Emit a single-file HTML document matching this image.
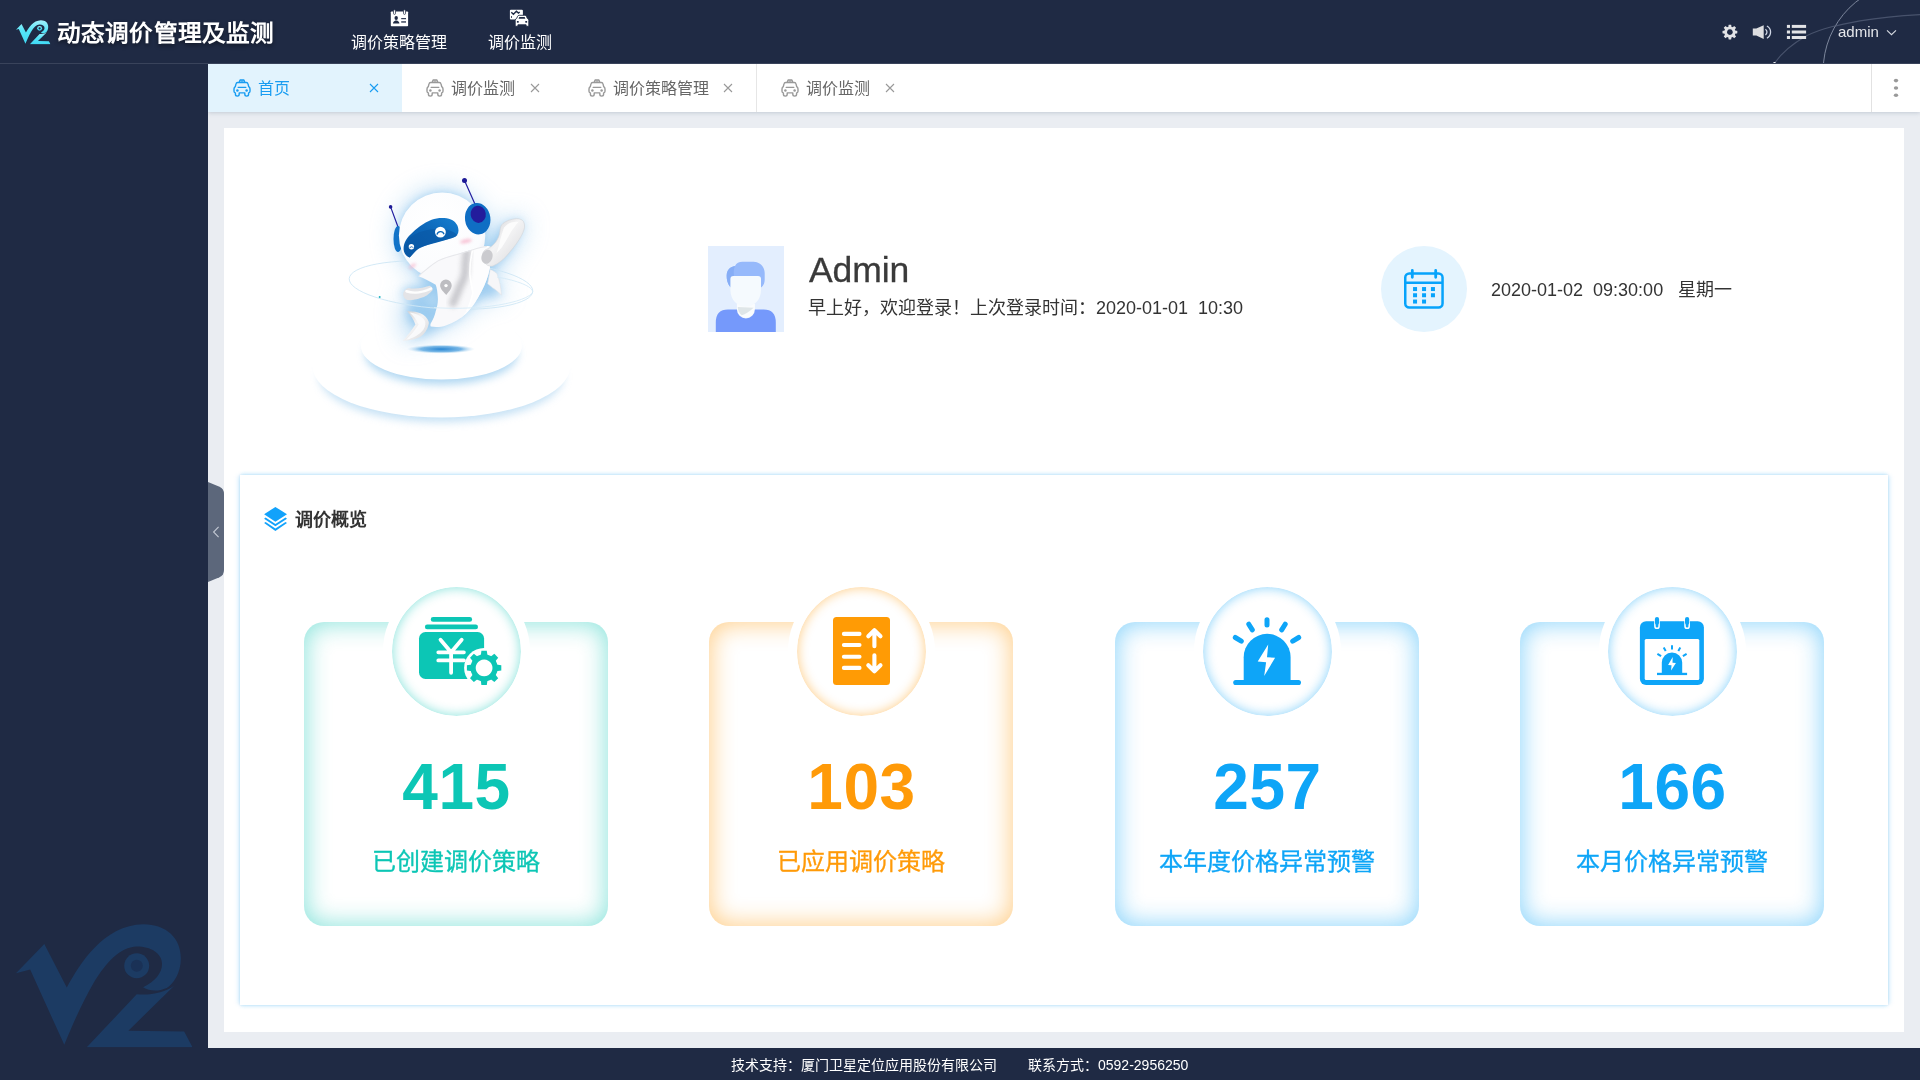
<!DOCTYPE html>
<html lang="zh-CN">
<head>
<meta charset="utf-8">
<title>动态调价管理及监测</title>
<style>
*{box-sizing:border-box;margin:0;padding:0}
html,body{width:1920px;height:1080px;overflow:hidden}
body{position:relative;background:#1f2a44;font-family:"Liberation Sans",sans-serif;color:#333}
.abs{position:absolute}
svg{display:block;overflow:visible}
/* header */
#header{position:absolute;left:0;top:0;width:1920px;height:64px;background:#1f2a44;border-bottom:1px solid #39435b;overflow:hidden}
#title{position:absolute;left:57px;top:16px;height:36px;line-height:36px;font-size:22.5px;transform:scaleX(1.0495);transform-origin:0 50%;font-weight:700;color:#fff;white-space:nowrap;text-shadow:0 2px 4px rgba(0,0,0,.45)}
.nav{position:absolute;top:0;height:64px;color:#fff;font-size:16px;text-align:center;white-space:nowrap}
.nav .t{position:absolute;left:0;right:0;top:31px;line-height:24px}
.nav svg{position:absolute;top:9px}
#user{position:absolute;left:1838px;top:20px;line-height:24px;font-size:15px;color:#e4e6ea}
/* sidebar */
#side{position:absolute;left:0;top:64px;width:208px;height:984px;background:#1f2a44;overflow:hidden}
/* tabs */
#tabs{position:absolute;left:208px;top:64px;width:1712px;height:48px;background:#fff;box-shadow:0 1px 4px rgba(110,125,150,.3);clip-path:inset(0 0 -12px 0);z-index:3}
.tab{position:absolute;top:0;height:48px;font-size:16px;line-height:48px;color:#666;white-space:nowrap}
.tab svg{position:absolute;top:14px}
.tab .tx{position:absolute;top:1px}
.tab.on{background:#e2f3fd;color:#189cf1}
/* main */
#main{position:absolute;left:208px;top:112px;width:1712px;height:936px;background:#eaedf2}
#box{position:absolute;left:224px;top:128px;width:1680px;height:904px;background:#fff}
#panel{position:absolute;left:240px;top:475px;width:1648px;height:530px;background:#fff;box-shadow:0 0 2px 0 rgba(150,185,225,.3),-3px 0 4px -1px rgba(150,212,250,.4),3px 0 4px -1px rgba(150,212,250,.4),0 -3px 3px -1px rgba(170,228,250,.32),0 3px 3px -1px rgba(170,228,250,.32)}
#ptitle{position:absolute;left:295px;top:506px;line-height:28px;font-size:18px;font-weight:700;color:#333}
.card{position:absolute;top:622px;width:304px;height:304px;border-radius:20px;background:#fff}
.circ{position:absolute;top:577.5px;width:147px;height:147px;border-radius:50%;border:9.5px solid #fff;background:#fff;margin-left:-1.5px}
.num{position:absolute;top:751px;width:304px;text-align:center;font-size:64px;line-height:72px;font-weight:700;letter-spacing:.5px;text-indent:1px}
.lab{position:absolute;top:843.5px;-webkit-text-stroke:.3px currentColor;width:304px;text-align:center;font-size:24px;line-height:36px;font-weight:500;white-space:nowrap}
.c1{color:#0cc6b5}.c2{color:#ff9a08}.c3{color:#0ea5f7}
.card.k1{box-shadow:inset 0 0 24px 2px rgba(12,198,181,.47)}
.card.k2{box-shadow:inset 0 0 24px 2px rgba(255,154,8,.47)}
.card.k3{box-shadow:inset 0 0 24px 2px rgba(14,165,247,.47)}
.circ.k1{box-shadow:inset 0 0 11px 1px rgba(12,198,181,.45)}
.circ.k2{box-shadow:inset 0 0 11px 1px rgba(255,154,8,.45)}
.circ.k3{box-shadow:inset 0 0 11px 1px rgba(14,165,247,.45)}
/* hero */
#uname{position:absolute;left:808.6px;top:245.5px;font-size:35.5px;line-height:48px;color:#3a3a3a;letter-spacing:-.1px;-webkit-text-stroke:.3px #3a3a3a}
#usub{position:absolute;left:808px;top:294px;font-size:18px;line-height:28px;color:#333;white-space:pre}
#calc{position:absolute;left:1381px;top:246px;width:86px;height:86px;border-radius:50%;background:#e4f4fe}
#date{position:absolute;left:1491px;top:276px;font-size:18px;line-height:28px;color:#333;white-space:pre}
#title,.nav .t,#user,.tab .tx,#uname,#usub,#date,#ptitle,.num,.lab,#foot span{will-change:transform}
/* footer */
#foot{position:absolute;left:0;top:1048px;width:1920px;height:32px;background:#1f2a44;color:#fff;font-size:14px;line-height:34px;white-space:pre}
</style>
</head>
<body>
<!-- SYMBOLS -->
<svg width="0" height="0" style="position:absolute">
<defs>
<symbol id="v2" viewBox="95 145 1060 740">
<path d="M95,440 L265,265 L400,525 C480,380 620,150 860,145 C1000,145 1085,230 1085,350 C1085,440 1040,505 1000,528 C950,550 900,548 858,524 C930,490 972,440 972,385 C972,320 905,280 820,280 C720,285 640,370 560,500 C490,620 430,760 385,870 L180,418 Z"/>
<path d="M820,566 C900,575 990,555 1045,515 L770,785 L1105,790 L1155,885 L520,885 Z"/>
<circle cx="820" cy="395" r="75"/>
</symbol>
<symbol id="taxi" viewBox="0 0 18 18">
<path d="M6.300,3.300 L7.100,1 H10.900 L11.700,3.300" fill="none" stroke="currentColor" stroke-width="1.400" stroke-linejoin="round"/>
<path d="M7.700,2.100 H10.300" stroke="currentColor" stroke-width="1.100" fill="none"/>
<path d="M4.700,3.500 H13.300 C14.300,3.500 14.800,4 15,4.900 L15.700,7.700 C16.600,8.300 17,9 17,10 V12.300 C17,13.300 16.500,13.800 15.600,13.900 V15.300 C15.600,16.500 14.900,17.100 13.700,17.100 C12.500,17.100 11.800,16.500 11.800,15.300 V13.900 H6.200 V15.300 C6.200,16.500 5.500,17.100 4.300,17.100 C3.100,17.100 2.400,16.500 2.400,15.300 V13.900 C1.500,13.800 1,13.300 1,12.300 V10 C1,9 1.400,8.300 2.300,7.700 L3,4.900 C3.200,4 3.700,3.500 4.700,3.500 Z" fill="none" stroke="currentColor" stroke-width="1.400" stroke-linejoin="round"/>
<path d="M5.200,8.400 H12.800" stroke="currentColor" stroke-width="1.300" stroke-linecap="round" fill="none"/>
<circle cx="4.400" cy="11.600" r="1.250" fill="currentColor"/><circle cx="13.600" cy="11.600" r="1.250" fill="currentColor"/>
</symbol>
<symbol id="xx" viewBox="0 0 10 10"><path d="M1,1 L9,9 M9,1 L1,9" stroke="currentColor" stroke-width="1.100" fill="none"/></symbol>
</defs>
</svg>

<!-- HEADER -->
<div id="header">
  <svg class="abs" style="left:16px;top:19.500px" width="34.500" height="24.500"><defs><linearGradient id="lg1" x1="0" y1="0" x2="0" y2="1"><stop offset="0" stop-color="#a4f1fb"/><stop offset=".45" stop-color="#55e4f8"/><stop offset="1" stop-color="#3fd9f5"/></linearGradient></defs><use href="#v2" width="34.500" height="24.500" fill="url(#lg1)"/><circle cx="23.600" cy="8.300" r="1.150" fill="#1f2a44"/></svg>
  <div id="title">动态调价管理及监测</div>
  <div class="nav" style="left:351px;width:96px"><div class="t">调价策略管理</div></div>
  <div class="nav" style="left:488px;width:64px"><div class="t">调价监测</div></div>
  <div id="user">admin</div>
  <svg class="abs" style="left:0;top:0" width="1920" height="64" viewBox="0 0 1920 64">
    <!-- decorative arcs -->
    <circle cx="1911.500" cy="70.600" r="88.300" fill="none" stroke="#8d97ab" stroke-width="1" opacity=".85"/>
    <path d="M1774,64 C1780,55 1792,44 1806.700,35.800 C1822,28 1840,24.500 1860,20.800 C1880,17.500 1900,15.600 1921,14.500" fill="none" stroke="#55607a" stroke-width="1.200" opacity=".75"/>
    <circle cx="1774.500" cy="63.600" r="1.600" fill="#fff"/>
    <!-- nav icon 1 : id card -->
    <g fill="#fff">
      <rect x="390.800" y="11.400" width="17.300" height="14.800" rx=".8"/>
      <rect x="393.500" y="9.800" width="2" height="4.600" rx="1" stroke="#1f2a44" stroke-width=".7"/>
      <rect x="403.500" y="9.800" width="2" height="4.600" rx="1" stroke="#1f2a44" stroke-width=".7"/>
    </g>
    <g fill="#1f2a44">
      <ellipse cx="396.200" cy="17.900" rx="1.700" ry="2"/>
      <path d="M393,23.400 C393,21.500 394.600,21.200 395.300,20.400 H397.100 C397.800,21.200 399.400,21.500 399.400,23.400 Z"/>
      <rect x="401.200" y="18.100" width="4.800" height="1.100"/>
      <rect x="401.200" y="21.300" width="4.800" height="1.300"/>
    </g>
    <!-- nav icon 2 : chart + car -->
    <rect x="509.900" y="9.800" width="13" height="9.700" rx="1" fill="#fff"/>
    <path d="M511.300,12.300 L513.400,14.300 L516.400,11.300 L518.400,13.100 L519.700,12" fill="none" stroke="#1f2a44" stroke-width="1.400"/>
    <path d="M511.500,16 V18" stroke="#1f2a44" stroke-width=".8"/>
    <path d="M515.200,26.300 V20.400 C515.200,19.300 515.800,18.700 516.600,18.500 L517.600,16.300 C517.900,15.600 518.400,15.300 519.200,15.300 H524.800 C525.600,15.300 526.100,15.600 526.400,16.300 L527.400,18.500 C528.200,18.700 528.800,19.300 528.800,20.400 V26.300 H526.100 V24.800 H517.900 V26.300 Z" fill="#fff" stroke="#1f2a44" stroke-width=".9"/>
    <path d="M518.600,18.800 L519.300,17 H524.700 L525.400,18.800 Z" fill="#1f2a44"/>
    <rect x="516.900" y="21" width="1.800" height="1.700" fill="#1f2a44"/><rect x="525.300" y="21" width="1.800" height="1.700" fill="#1f2a44"/>
    <!-- gear -->
    <g transform="translate(1729.900 32.100)" fill="#e2e3e6">
      <path fill-rule="evenodd" d="M0,-5.700 A5.700,5.700 0 1 0 0.010,-5.700 Z M0,-2.900 A2.900,2.900 0 1 1 -0.010,-2.900 Z"/>
      <g id="teeth"><rect x="-1.400" y="-7.400" width="2.800" height="3" rx=".4"/><rect x="-1.400" y="4.400" width="2.800" height="3" rx=".4"/><rect x="-7.400" y="-1.400" width="3" height="2.800" rx=".4"/><rect x="4.400" y="-1.400" width="3" height="2.800" rx=".4"/></g>
      <use href="#teeth" transform="rotate(45)"/>
    </g>
    <!-- speaker -->
    <path d="M1752.800,28.600 H1756.300 L1763.700,25.300 V38.900 L1756.300,35.600 H1752.800 Z" fill="#dcdde0"/>
    <path d="M1765.400,29.300 A3.300,3.300 0 0 1 1765.400,34.900" fill="none" stroke="#cfd6e6" stroke-width="1.300"/>
    <path d="M1766.900,26 A6.900,6.900 0 0 1 1766.900,38.200" fill="none" stroke="#cfd6e6" stroke-width="1.300"/>
    <!-- list -->
    <g fill="#e2e3e6">
      <rect x="1786.900" y="24.900" width="3.100" height="3"/><rect x="1791.800" y="24.900" width="14.300" height="3"/>
      <rect x="1786.900" y="30.500" width="3.100" height="3"/><rect x="1791.800" y="30.500" width="14.300" height="3"/>
      <rect x="1786.900" y="36" width="3.100" height="3"/><rect x="1791.800" y="36" width="14.300" height="3"/>
    </g>
    <!-- chevron -->
    <path d="M1887,30.300 L1891.500,34.700 L1896,30.300" fill="none" stroke="#d5d9e0" stroke-width="1.100"/>
  </svg>
</div>

<!-- SIDEBAR -->
<div id="side">
  <svg class="abs" style="left:16px;top:860px" width="176.500" height="123.500"><use href="#v2" width="176.500" height="123.500" fill="#1c3b63"/><circle cx="120.800" cy="41.700" r="6" fill="#1a3156"/></svg>
</div>

<!-- TABS -->
<div id="tabs">
  <div class="tab on" style="left:0;width:194px"><svg style="left:25px;top:15px;color:#189cf1" width="18" height="18"><use href="#taxi"/></svg><span class="tx" style="left:50px">首页</span><svg style="left:161px;top:19px" width="10" height="10"><use href="#xx"/></svg></div>
  <div class="tab" style="left:193px;width:162px"><svg style="left:25px;top:15px;color:#999" width="18" height="18"><use href="#taxi"/></svg><span class="tx" style="left:50px">调价监测</span><svg style="left:129px;top:19px;color:#999" width="10" height="10"><use href="#xx"/></svg></div>
  <div class="tab" style="left:355px;width:194px;border-right:1px solid #e6e6e6"><svg style="left:25px;top:15px;color:#999" width="18" height="18"><use href="#taxi"/></svg><span class="tx" style="left:50px">调价策略管理</span><svg style="left:160px;top:19px;color:#999" width="10" height="10"><use href="#xx"/></svg></div>
  <div class="tab" style="left:548px;width:162px"><svg style="left:25px;top:15px;color:#999" width="18" height="18"><use href="#taxi"/></svg><span class="tx" style="left:50px">调价监测</span><svg style="left:129px;top:19px;color:#999" width="10" height="10"><use href="#xx"/></svg></div>
  <div class="abs" style="left:1663px;top:0;width:1px;height:48px;background:#e2e2e2"></div>
  <svg class="abs" style="left:1685px;top:13px" width="6" height="22"><ellipse cx="3" cy="3.600" rx="2.200" ry="1.800" fill="#999"/><ellipse cx="3" cy="11" rx="2.200" ry="1.800" fill="#999"/><ellipse cx="3" cy="18.300" rx="2.200" ry="1.800" fill="#999"/></svg>
</div>

<!-- MAIN -->
<div id="main"></div>
<div id="box"></div>

<!-- HERO -->
<div id="uname">Admin</div>
<div id="usub">早上好，欢迎登录！上次登录时间：2020-01-01  10:30</div>
<div id="calc"></div>
<div id="date">2020-01-02  09:30:00   星期一</div>

<!-- PANEL -->
<div id="panel"></div>
<div id="ptitle">调价概览</div>

<div class="card k1" style="left:304px"></div>
<div class="card k2" style="left:709px"></div>
<div class="card k3" style="left:1115px"></div>
<div class="card k3" style="left:1520px"></div>
<div class="circ k1" style="left:384px"></div>
<div class="circ k2" style="left:789px"></div>
<div class="circ k3" style="left:1195px"></div>
<div class="circ k3" style="left:1600px"></div>
<div class="num c1" style="left:304px">415</div>
<div class="num c2" style="left:709px">103</div>
<div class="num c3" style="left:1115px">257</div>
<div class="num c3" style="left:1520px">166</div>
<div class="lab c1" style="left:304px">已创建调价策略</div>
<div class="lab c2" style="left:709px">已应用调价策略</div>
<div class="lab c3" style="left:1115px">本年度价格异常预警</div>
<div class="lab c3" style="left:1520px">本月价格异常预警</div>

<!-- ICON OVERLAY (page coordinates) -->
<svg class="abs" id="ov" style="left:0;top:0;z-index:5" width="1920" height="1080" viewBox="0 0 1920 1080">
  <!-- mascot -->
  <defs>
    <filter id="b3" x="-30%" y="-30%" width="160%" height="160%"><feGaussianBlur stdDeviation="3"/></filter>
    <filter id="b5" x="-30%" y="-60%" width="160%" height="220%"><feGaussianBlur stdDeviation="4.500"/></filter>
    <filter id="b12" x="-70%" y="-70%" width="240%" height="240%"><feGaussianBlur stdDeviation="13"/></filter><filter id="b5g" x="-30%" y="-30%" width="160%" height="160%"><feGaussianBlur stdDeviation="5"/></filter>
    <filter id="b3s" x="-50%" y="-20%" width="200%" height="140%"><feGaussianBlur stdDeviation="2.600"/></filter><filter id="b1" x="-30%" y="-80%" width="160%" height="260%"><feGaussianBlur stdDeviation="1.600"/></filter>
    <radialGradient id="gHead" cx=".42" cy=".35" r=".75"><stop offset="0" stop-color="#fff"/><stop offset=".75" stop-color="#fbfcfe"/><stop offset="1" stop-color="#e6e9f0"/></radialGradient>
    <linearGradient id="gBody" x1="0" y1="0" x2="1" y2="0"><stop offset="0" stop-color="#fff"/><stop offset=".5" stop-color="#fafafa"/><stop offset=".68" stop-color="#cfcfd2"/><stop offset=".8" stop-color="#f1f1f3"/><stop offset="1" stop-color="#fff"/></linearGradient>
    <linearGradient id="gArm" x1="0" y1="0" x2="1" y2="1"><stop offset="0" stop-color="#c9c9cc"/><stop offset=".45" stop-color="#f4f4f5"/><stop offset="1" stop-color="#d6d6d9"/></linearGradient>
    <linearGradient id="gVis" x1="0" y1="1" x2="1" y2="0"><stop offset="0" stop-color="#0a58a6"/><stop offset=".55" stop-color="#0c66b8"/><stop offset="1" stop-color="#167fd0"/></linearGradient>
    <radialGradient id="gSh" cx=".5" cy=".5" r=".5"><stop offset="0" stop-color="#2584d2"/><stop offset=".6" stop-color="#58a6e0" stop-opacity=".8"/><stop offset="1" stop-color="#bfe0f5" stop-opacity="0"/></radialGradient>
  </defs>
  <!-- platforms -->
  <ellipse cx="441.400" cy="376" rx="122" ry="46" fill="#9fcdee" opacity=".6" filter="url(#b5)"/>
  <ellipse cx="441.400" cy="366" rx="129" ry="51.500" fill="#fff"/>
  <ellipse cx="441.400" cy="354" rx="76" ry="30.500" fill="#8ec6ec" opacity=".7" filter="url(#b5)"/>
  <ellipse cx="441.400" cy="346" rx="80.500" ry="33.500" fill="#fff"/>
  <ellipse cx="441" cy="349.100" rx="34" ry="4.600" fill="url(#gSh)"/>
  <!-- glow behind robot -->
  <g filter="url(#b12)" fill="#7dbdec" opacity=".5">
    <circle cx="442" cy="236" r="46"/>
    <path d="M419,276 L430,299 L400,300 L404,342 L424,336 L458,318 L480,298 L505,297 L492,272 L511,254 L526,226 L520,216 L501,223 L486,250 Z"/>
  </g>
  <g filter="url(#b5g)" fill="#7dbbea" opacity=".58">
    <circle cx="442" cy="236" r="43"/>
    <path d="M419,276 L437,299 L431,324 L404,342 L424,336 L458,318 L480,298 L502,295 L490,272 L509,253 L523,226 L519,219 L503,225 L486,250 Z"/>
    <ellipse cx="417.500" cy="293" rx="16" ry="7"/>
    <ellipse cx="420" cy="312" rx="14" ry="16"/>
  </g>
  <!-- orbit back -->
  <ellipse cx="441" cy="285" rx="92" ry="23.500" transform="rotate(4 441 285)" fill="none" stroke="#cfe7f5" stroke-width=".9"/>
  <circle cx="379.700" cy="297" r="1" fill="#22b5c0"/>
  <!-- antennas -->
  <path d="M464.500,180.500 L475.800,206 M390.600,206.900 L398.400,228" stroke="#231fa0" stroke-width="1.200" fill="none"/>
  <circle cx="464.500" cy="180.500" r="2.500" fill="#1d1a96"/><circle cx="390.600" cy="206.900" r="1.800" fill="#1d1a96"/>
  <!-- left ear -->
  <ellipse cx="398" cy="239" rx="4.500" ry="13" fill="#1273c8"/>
  <!-- head -->
  <circle cx="442.100" cy="235.600" r="43.200" fill="url(#gHead)"/>
  <!-- right ear -->
  <ellipse cx="477.700" cy="218.700" rx="12.700" ry="15.800" transform="rotate(-8 477.700 218.700)" fill="#0f6ec4"/>
  <ellipse cx="478.200" cy="214.300" rx="7.600" ry="8.600" transform="rotate(-8 478.200 214.300)" fill="#231c9c"/>
  <!-- visor -->
  <path d="M403.600,249.500 C403.500,243.500 406,238.500 410.500,234.400 C416.500,228.500 423.500,223 431.600,219.800 C438,217.600 445.500,217.600 450.900,219.500 C455.500,221.500 458.500,225.500 458.500,230.600 C458.500,234 456.500,236.800 453,237.800 C447.500,239.500 442,241 436.900,242.400 C430.500,244 424.500,245.500 419.300,248.200 C415.500,250.500 413,254 409.800,257.600 C406.500,256.500 404,253.500 403.600,249.500 Z" fill="url(#gVis)"/>
  <path d="M409,238 C418,231 432,227.500 444,229 C450,230 455,232.500 457.500,235 C455,237.500 450,238.600 445,240 C437,242 428,244 420.500,247.500 C416,250 413,254 409.800,257.600 C405,255 403,247 409,238 Z" fill="#0a55a2" opacity=".55"/>
  <circle cx="440.400" cy="232.100" r="5.400" fill="#fff"/>
  <path d="M437,234.600 A3.600,3.600 0 0 1 444,234.200" fill="none" stroke="#0c66b8" stroke-width="1.300"/>
  <circle cx="411.400" cy="246.800" r="2.700" fill="#fff"/>
  <path d="M409.800,248.200 A1.800,1.800 0 0 1 413.200,247.800" fill="none" stroke="#0a58a6" stroke-width=".8"/>
  <!-- tail -->
  <path d="M407.200,311.300 C412,311 417,311.800 420.500,313.300 C424.500,315 427.500,318 428.600,321.500 C429,322.500 429,323.500 428.600,324.500 C427.500,329.500 424.500,334 420.500,336.800 C415.500,339.500 408.500,340.800 402.600,340.800 C407,336.500 411.500,330.500 415.400,324.500 C413.500,319.500 410.500,315 407.200,311.300 Z" fill="url(#gArm)"/>
  <path d="M409.500,312.500 C415,313 421,315.500 424.500,320 C426,322.500 425.500,326 423.500,329.500 C420,334.500 413,338.500 406,339.800 C411,335 415.500,329.500 418.500,324.500 C416.500,319.500 413.500,315.500 409.500,312.500 Z" fill="#fbfbfc" opacity=".9"/>
  <!-- right fin -->
  <path d="M490.200,269.500 C493,270.500 495.200,272 496.900,273.600 C499.500,280 501,287.500 501.400,295 C498.500,292 495.500,289.500 492.800,287.900 C491,286.500 489.300,285 487.700,283.800 Z" fill="#f6f6f8" stroke="#dfe0e4" stroke-width=".5"/>
  <!-- body -->
  <clipPath id="cpBody"><path id="bodyP" d="M418.400,276.200 C420.500,273.500 423,271.500 425.600,269.500 C429.500,266 433.500,263 437.800,260.400 C443.500,257.800 449.500,255.800 456.100,254.300 C463,252.500 470,250.300 476.500,248.100 C480,247 483.500,246.300 486.700,246 C488.500,246 490,246.500 491,247.500 C491.600,254.500 491,262 489.700,268.500 C488,276.500 485.500,284 481.600,290.900 C477.500,299 472.500,307 466.300,313.300 C460.500,319 453.500,323 445.900,325.600 C441,327.200 435.500,327.500 430.700,326.600 C430.300,325.500 430.300,324.500 430.700,323.500 C433,319.500 435,315.500 435.700,311.300 C437.300,306.500 438.200,301.500 437.800,297 C437.500,292.500 437,288.500 435.700,284.800 C430.500,281.500 424.500,278.500 418.400,276.200 Z"/></clipPath>
  <use href="#bodyP" fill="#f9f9fb"/>
  <g clip-path="url(#cpBody)">
    <path d="M472.400,249 C470.500,256 469,266 469.400,275.700 C470,281.500 471.500,287.500 472.400,293 C471,299.500 469,305.500 466.300,311.300 C462,318 456,324 450,329 L470,332 L500,290 L496,238 Z" fill="#fdfdfe"/>
    <path d="M466.800,252 C465.800,259 465.200,265 465.300,270.600 C465,276 463,281 460.200,285.800 C458,291.500 455.500,297.500 453,303" fill="none" stroke="#bdbdc2" stroke-width="8" stroke-linecap="round" opacity=".8" filter="url(#b3s)"/>
    <path d="M472.800,249.500 C471,256 469.600,266 470,275.700 C470.600,281.500 472,287.500 472.900,293 C471.500,299.500 469.500,305.500 466.800,311.300" fill="none" stroke="#fff" stroke-width="1.600" opacity=".95"/>
    <path d="M418.400,276.200 C420.500,273.500 423,271.500 425.600,269.500 C429.500,266 433.500,263 437.800,260.400 C443.500,257.800 449.500,255.800 456.100,254.300 C463,252.500 470,250.300 476.500,248.100 C480,247 483.500,246.300 486.700,246" fill="none" stroke="#e6e7eb" stroke-width="1.800"/>
  </g>
  <!-- belly pin -->
  <path d="M445.900,279.500 A5.800,5.800 0 0 1 451.700,285.300 C451.700,289.300 448,292.500 446.300,295 C444.200,292.500 440.100,289.300 440.100,285.300 A5.800,5.800 0 0 1 445.900,279.500 Z" fill="#bdbdc1"/>
  <circle cx="446" cy="285.600" r="1.700" fill="#fff"/>
  <!-- left arm -->
  <path d="M403.100,294 C403.500,291 405.500,289 408.200,287.900 C415,289.500 423,288 429.600,285.800 C431.500,286.500 432.700,288 432.700,289.900 C429.500,294 425,296.800 420.500,298.100 C416,299.800 411.500,300.500 407.200,300.100 C404.500,299 403,296.500 403.100,294 Z" fill="#e4e4e7"/>
  <path d="M406.500,291.300 C414,294 424,292 431,288.600" fill="none" stroke="#fdfdfd" stroke-width="2.600" stroke-linecap="round"/>
  <!-- right arm -->
  <path d="M493,266 C499.500,263 505,258.500 509,253 C514.500,246.500 519,240.500 521.500,235.500 C523.500,231.500 525,228 524.500,225 C524.200,222 523,220.300 521,219.500 C519,218.600 517,218.500 515,218.800 C511.500,219.200 508.500,220.200 506,221.500 C503.500,222.800 501.800,224.200 501,226 C500,228.500 500,231.500 499.500,234 C498.500,238 496.500,241.500 494,244 C491.500,246.800 488,248.800 485,250 C483,251.500 482.200,254 482.500,256.500 C482.800,258.800 483.300,260.500 484,262 C486,265 489.500,266.800 493,266 Z" fill="url(#gArm)" stroke="#d4d5d9" stroke-width=".6"/>
  <path d="M504,227.500 C507.500,223 513,221 518.800,221.800 C514.500,226 510.500,232.500 507,239 C504,244.500 500.500,250 496.500,253 C499.500,245 501,235 504,227.500 Z" fill="#fdfdfd" opacity=".9"/>
  <ellipse cx="487" cy="256.800" rx="5.400" ry="7.200" transform="rotate(20 487 256.800)" fill="#cbcbcf"/>
  <!-- blush -->
  <ellipse cx="465.900" cy="241.200" rx="6" ry="1.900" transform="rotate(-12 465.900 241.200)" fill="#f7b6cc" opacity=".85" filter="url(#b1)"/>
  <ellipse cx="412.400" cy="266" rx="4" ry="1.600" transform="rotate(-35 412.400 266)" fill="#f7b6cc" opacity=".85" filter="url(#b1)"/>
  <!-- orbit front -->
  <path d="M434,307.500 C470,310.500 520,305 532,293.500 C536,288 520,281 497,277" fill="none" stroke="#d6ebf7" stroke-width=".9"/>

  <!-- collapse handle -->
  <path d="M208,482 L219.500,486.800 Q224,488.800 224,494 V570 Q224,575.200 219.500,577.200 L208,582 Z" fill="#5c677b"/>
  <path d="M218.600,526.800 L213.600,532 L218.600,537.200" fill="none" stroke="#c3c9d3" stroke-width="1.100"/>

  <!-- avatar -->
  <g transform="translate(708 246)">
    <rect width="76" height="86" fill="#e3eefe"/>
    <path d="M22.400,41.200 C19.600,38 18.400,33 18.700,29.200 C18.800,24.500 21.500,20.800 27,19.900 C28.500,17 31,15.800 34.400,15.800 H45.600 C51.500,15.800 56.700,20.500 56.700,27 V33.800 C56.700,37 55.500,39.500 53.400,41.200 Z" fill="#96b9fb"/>
    <path d="M22.400,41.200 C19.600,38 18.400,33 18.700,29.200 C18.800,24.500 21.500,20.800 27,19.900 C25.500,23 25.500,27 26,30 Z" fill="#86adf6"/>
    <path d="M28.900,58 H46.900 V63 A9,9 0 0 1 28.900,63 Z" fill="#fafcfd"/>
    <path d="M29.800,61 L45.600,61.800 C42,65.500 37,68.300 33.800,69.300 C31.300,67.300 29.800,64.500 29.800,61 Z" fill="#dfe6e8"/>
    <path d="M25.400,30.100 H50 Q53,30.100 53,33.100 V44 C53,54 46,60.700 37.700,60.700 C29.400,60.700 22.400,54 22.400,44 V33.100 Q22.400,30.100 25.400,30.100 Z" fill="#f5fafe"/>
    <path d="M7.800,86 V76.500 Q7.800,63.400 20,63.400 H28.900 A9,9 0 0 0 46.900,63.400 H55.600 Q67.800,63.400 67.800,76.500 V86 Z" fill="#7599fb"/>
  </g>

  <!-- calendar -->
  <g fill="none" stroke="#06a3fb" stroke-width="2.500">
    <rect x="1405.250" y="273.550" width="37.300" height="34" rx="4"/>
    <path d="M1405.250,282.750 H1442.550"/>
    <path d="M1412.300,270.400 V277.300 M1435.700,270.400 V277.300" stroke-width="2.800" stroke-linecap="round"/>
  </g>
  <g fill="#06a3fb">
    <rect x="1413.050" y="287.050" width="4" height="4"/><rect x="1422.050" y="287.050" width="4" height="4"/><rect x="1430.950" y="287.050" width="4" height="4"/>
    <rect x="1413.050" y="293.250" width="4" height="4"/><rect x="1422.050" y="293.250" width="4" height="4"/><rect x="1430.950" y="293.250" width="4" height="4"/>
    <rect x="1413.050" y="299.550" width="4" height="4"/><rect x="1422.050" y="299.550" width="4" height="4"/>
  </g>

  <!-- layers icon -->
  <g fill="#12a2fb">
    <path d="M275.400,506.900 L287,514.300 L275.400,521.800 L264.100,514.300 Z"/>
    <path d="M265.600,517.600 L275.400,524 L285.500,517.600 L287,518.700 L275.400,526.300 L264.100,518.700 Z"/>
    <path d="M265.600,522 L275.400,528.400 L285.500,522 L287,523.100 L275.400,530.900 L264.100,523.100 Z"/>
  </g>

  <!-- card 1 icon : wallet + gear -->
  <g fill="#0cc6b5">
    <rect x="430.800" y="617" width="41.300" height="4.700" rx="2.300"/>
    <rect x="424.900" y="624.600" width="53.100" height="4.700" rx="2.300"/>
    <rect x="419" y="632" width="65.100" height="47" rx="6.500"/>
  </g>
  <g fill="none" stroke="#fff" stroke-width="3.800" stroke-linecap="round">
    <path d="M440.500,639.800 L451.100,652.300 L461.700,639.800 M451.100,652.300 V672.800 M438.300,652.300 H463.900 M438.300,660.400 H463.900"/>
  </g>
  <circle cx="484.100" cy="667.900" r="20" fill="#fff"/>
  <g transform="translate(484.100 667.900)" fill="#0cc6b5">
    <path fill-rule="evenodd" d="M0,-13.600 A13.600,13.600 0 1 0 0.010,-13.600 Z M0,-8.400 A8.400,8.400 0 1 1 -0.010,-8.400 Z"/>
    <g id="t2"><path d="M-3.400,-12 L-2.700,-17.200 H2.700 L3.400,-12 Z"/><path d="M-3.400,12 L-2.700,17.200 H2.700 L3.400,12 Z"/></g>
    <use href="#t2" transform="rotate(45)"/><use href="#t2" transform="rotate(90)"/><use href="#t2" transform="rotate(135)"/>
  </g>

  <!-- card 2 icon : doc + arrows -->
  <rect x="833" y="616.900" width="57" height="68.100" rx="3.500" fill="#ff9b05"/>
  <g fill="none" stroke="#fff" stroke-width="4.100" stroke-linecap="round" stroke-linejoin="round">
    <path d="M843.900,633.900 H859.500 M843.900,645 H859.500 M843.900,656.800 H859.500 M843.900,667.900 H859.500"/>
    <path d="M874.400,630.800 V646.200 M868.300,636.300 L874.400,630.200 L880.500,636.300"/>
    <path d="M874.400,655.300 V670.800 M868.300,665.200 L874.400,671.300 L880.500,665.200"/>
  </g>

  <!-- card 3 icon : alarm -->
  <g fill="#0ea5f8">
    <path d="M1243.700,681 V657.300 A23.450,23.450 0 0 1 1290.600,657.300 V681 Z"/>
    <rect x="1233.200" y="679.900" width="67.800" height="5.100" rx="2.550"/>
  </g>
  <g fill="none" stroke="#0ea5f8" stroke-width="5" stroke-linecap="round">
    <path d="M1267,619.700 V625 M1248.800,624.200 L1252.300,629.800 M1285.200,624.200 L1281.700,629.800 M1235.300,637.500 L1241.300,641.100 M1298.700,637.500 L1292.700,641.100"/>
  </g>
  <path d="M1268.200,644.500 L1257.700,661.600 L1266.100,662.300 L1264.200,676 L1275.100,657.700 L1267,657.200 Z" fill="#fff"/>

  <!-- card 4 icon : calendar + alarm -->
  <rect x="1639.900" y="621.200" width="64" height="63.800" rx="6.200" fill="#0ea5f8"/>
  <rect x="1644.700" y="639" width="54.600" height="41" rx="1.500" fill="#fff"/>
  <g fill="#0ea5f8" stroke="#fff" stroke-width="1.500">
    <rect x="1654.900" y="616.200" width="4.200" height="12.100" rx="2.100"/>
    <rect x="1685" y="616.200" width="4.200" height="12.100" rx="2.100"/>
  </g>
  <rect x="1654.150" y="615.400" width="5.700" height="5.800" fill="#fff"/><rect x="1684.250" y="615.400" width="5.700" height="5.800" fill="#fff"/>
  <g fill="#0ea5f8">
    <rect x="1654.900" y="616.900" width="4.200" height="8" rx="2.100"/><rect x="1685" y="616.900" width="4.200" height="8" rx="2.100"/>
    <path d="M1661.800,673.500 V662.600 A10.200,10.200 0 0 1 1682.200,662.600 V673.500 Z"/>
    <rect x="1657" y="672.800" width="30.100" height="2.300"/>
  </g>
  <g fill="none" stroke="#0ea5f8" stroke-width="2" stroke-linecap="butt">
    <path d="M1672,645.300 V649.600 M1663.700,647.600 L1665.700,651 M1680.300,647.600 L1678.300,651 M1657.400,653.800 L1661.100,656.100 M1686.600,653.800 L1682.900,656.100"/>
  </g>
  <path d="M1672.700,657 L1668.100,664.900 L1671.500,665.200 L1671.100,670.400 L1675.900,663 L1672.500,662.800 Z" fill="#fff"/>
</svg>

<!-- FOOTER -->
<div id="foot"><span class="abs" style="left:731px">技术支持：厦门卫星定位应用股份有限公司</span><span class="abs" style="left:1028px">联系方式：0592-2956250</span></div>
</body>
</html>
